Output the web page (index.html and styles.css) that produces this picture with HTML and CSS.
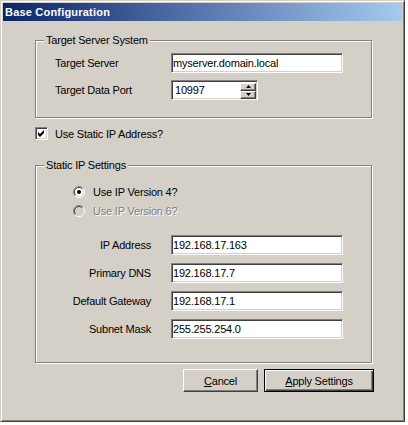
FILE: index.html
```html
<!DOCTYPE html>
<html>
<head>
<meta charset="utf-8">
<title>Base Configuration</title>
<link rel="stylesheet" href="styles.css">
</head>
<body>
<div class="window">
  <div class="titlebar">Base Configuration</div>
  <div class="content">
    <div class="group g1">
      <span class="legend">Target Server System</span>
      <div class="row">
        <label class="lbl">Target Server</label>
        <input class="edit wide" type="text" value="myserver.domain.local">
      </div>
      <div class="row">
        <label class="lbl">Target Data Port</label>
        <div class="edit spin">
          <span class="spin-text">10997</span>
          <span class="spinbtns">
            <span class="sb"><svg width="5" height="3" viewBox="0 0 5 3"><path d="M0 3L2.5 0L5 3Z" fill="#000"/></svg></span>
            <span class="sb"><svg width="5" height="3" viewBox="0 0 5 3"><path d="M0 0L2.5 3L5 0Z" fill="#000"/></svg></span>
          </span>
        </div>
      </div>
    </div>

    <div class="check-row">
      <span class="checkbox"><svg width="7" height="7" viewBox="0 0 7 7"><path d="M0 2L2 4L6 0L6 3L2 7L0 5Z" fill="#000"/></svg></span>
      <span class="check-label">Use Static IP Address?</span>
    </div>

    <div class="group g2">
      <span class="legend">Static IP Settings</span>
      <div class="radio-row">
        <svg class="radio" width="12" height="12" viewBox="0 0 12 12">
          <circle cx="6" cy="6" r="5" fill="#fff"/>
          <path d="M2.1 9.9A5.5 5.5 0 0 1 9.9 2.1" stroke="#808080" fill="none"/>
          <path d="M9.9 2.1A5.5 5.5 0 0 1 2.1 9.9" stroke="#fff" fill="none"/>
          <path d="M2.8 9.2A4.5 4.5 0 0 1 9.2 2.8" stroke="#404040" fill="none"/>
          <path d="M9.2 2.8A4.5 4.5 0 0 1 2.8 9.2" stroke="#d4d0c8" fill="none"/>
          <circle cx="6" cy="6" r="2" fill="#000"/>
        </svg>
        <span class="radio-label">Use IP Version 4?</span>
      </div>
      <div class="radio-row disabled">
        <svg class="radio" width="12" height="12" viewBox="0 0 12 12">
          <circle cx="6" cy="6" r="5" fill="#d4d0c8"/>
          <path d="M2.1 9.9A5.5 5.5 0 0 1 9.9 2.1" stroke="#808080" fill="none"/>
          <path d="M9.9 2.1A5.5 5.5 0 0 1 2.1 9.9" stroke="#fff" fill="none"/>
          <path d="M2.8 9.2A4.5 4.5 0 0 1 9.2 2.8" stroke="#404040" fill="none"/>
          <path d="M9.2 2.8A4.5 4.5 0 0 1 2.8 9.2" stroke="#d4d0c8" fill="none"/>
        </svg>
        <span class="radio-label">Use IP Version 6?</span>
      </div>
      <div class="ip-rows">
        <div class="row">
          <label class="lbl right">IP Address</label>
          <input class="edit wide" type="text" value="192.168.17.163">
        </div>
        <div class="row">
          <label class="lbl right">Primary DNS</label>
          <input class="edit wide" type="text" value="192.168.17.7">
        </div>
        <div class="row">
          <label class="lbl right">Default Gateway</label>
          <input class="edit wide" type="text" value="192.168.17.1">
        </div>
        <div class="row">
          <label class="lbl right">Subnet Mask</label>
          <input class="edit wide" type="text" value="255.255.254.0">
        </div>
      </div>
    </div>

    <div class="buttons">
      <button class="btn cancel"><u>C</u>ancel</button>
      <button class="btn default"><u>A</u>pply Settings</button>
    </div>
  </div>
</div>
</body>
</html>
```

FILE: styles.css
```css
* {
  box-sizing: border-box;
}

body {
  margin: 0;
  background: #fff;
  font-family: "Liberation Sans", Arial, sans-serif;
  font-size: 11px;
  letter-spacing: -0.2px;
  color: #000;
}

.window {
  width: 405px;
  height: 422px;
  background: #d4d0c8;
  border: 1px solid;
  border-color: #d4d0c8 #404040 #404040 #d4d0c8;
  box-shadow: inset 1px 1px #fff, inset -1px -1px #808080;
  padding: 2px;
}

.titlebar {
  height: 18px;
  line-height: 18px;
  padding-left: 2px;
  background: linear-gradient(to right, #0a246a, #a6caf0);
  color: #fff;
  font-weight: bold;
  letter-spacing: 0.2px;
}

.content {
  padding: 19px 0 0 32px;
}

.group {
  position: relative;
  width: 337px;
  border: 1px solid #808080;
  box-shadow: inset 1px 1px #fff, 1px 1px #fff;
}

.legend {
  position: absolute;
  top: -7px;
  left: 8px;
  padding: 0 2px;
  line-height: 13px;
  background: #d4d0c8;
}

.g1 {
  padding: 12px 0 17px 19px;
}

.row {
  display: flex;
  align-items: center;
  height: 20px;
}

.row + .row {
  margin-top: 7px;
}

.lbl {
  width: 116px;
}

.edit {
  height: 20px;
  border: 1px solid;
  border-color: #808080 #fff #fff #808080;
  box-shadow: inset 1px 1px #404040, inset -1px -1px #d4d0c8;
  background: #fff;
  font: inherit;
  letter-spacing: inherit;
  color: #000;
  padding: 0 0 0 1px;
  margin: 0;
  outline: none;
}

.wide {
  width: 172px;
}

.spin {
  width: 87px;
  display: flex;
  align-items: center;
  padding: 1px 1px 1px 3px;
}

.spin-text {
  flex: 1;
}

.spinbtns {
  display: flex;
  flex-direction: column;
  padding-top: 1px;
}

.sb {
  width: 16px;
  height: 8px;
  display: flex;
  align-items: center;
  justify-content: center;
  background: #d4d0c8;
  border: 1px solid;
  border-color: #fff #404040 #404040 #fff;
  box-shadow: inset -1px -1px #808080;
}

.sb svg {
  display: block;
}

.check-row {
  display: flex;
  align-items: center;
  height: 13px;
  margin-top: 9px;
}

.checkbox {
  width: 13px;
  height: 13px;
  padding: 2px;
  border: 1px solid;
  border-color: #808080 #fff #fff #808080;
  box-shadow: inset 1px 1px #404040, inset -1px -1px #d4d0c8;
  background: #fff;
}

.checkbox svg {
  display: block;
}

.check-label {
  margin-left: 7px;
}

.g2 {
  margin-top: 25px;
  padding: 17px 0 23px 0;
}

.radio-row {
  display: flex;
  align-items: center;
  height: 17px;
  padding-left: 37px;
}

.radio-row + .radio-row {
  margin-top: 2px;
}

.radio {
  display: block;
  flex: none;
}

.radio-label {
  margin-left: 8px;
}

.disabled .radio-label {
  color: #808080;
  text-shadow: 1px 1px #fff;
}

.ip-rows {
  margin-top: 16px;
}

.ip-rows .row + .row {
  margin-top: 8px;
}

.lbl.right {
  width: 135px;
  padding-right: 20px;
  text-align: right;
}

.buttons {
  display: flex;
  gap: 6px;
  margin-top: 6px;
  padding-left: 148px;
}

.btn {
  height: 23px;
  padding: 0;
  font: inherit;
  letter-spacing: inherit;
  color: #000;
  background: #d4d0c8;
  border: 1px solid;
  border-color: #fff #404040 #404040 #fff;
  box-shadow: inset -1px -1px #808080;
}

.cancel {
  width: 75px;
}

.default {
  width: 110px;
  border: 1px solid #000;
  box-shadow: inset 1px 1px #fff, inset -1px -1px #404040, inset -2px -2px #808080;
}
```
